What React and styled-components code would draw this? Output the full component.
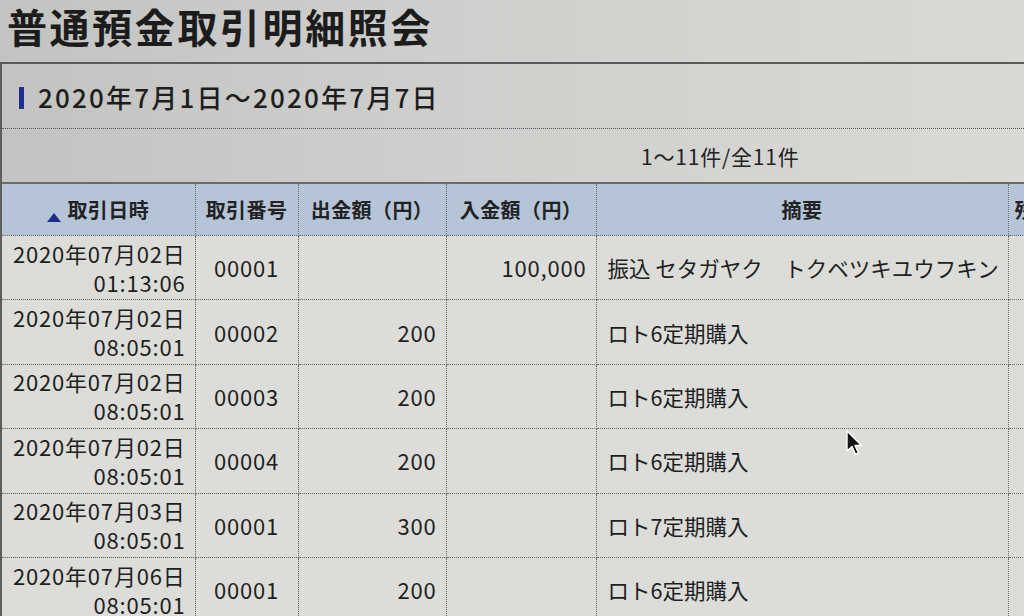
import React from "react";
import styled, { createGlobalStyle } from "styled-components";

const GlobalStyle = createGlobalStyle`
  html, body { margin: 0; padding: 0; overflow: hidden; background: #d0d0ce; }
  body { font-family: "Noto Sans CJK JP", "Noto Sans", sans-serif; color: #222; }
`;

const Page = styled.div`
  position: relative;
  width: 1024px;
  height: 616px;
  overflow: hidden;
  background: linear-gradient(90deg, #c3c3c1 0%, #cfcfcd 45%, #d9d9d6 100%);
`;

const TitleBar = styled.header`
  height: 64px;
  box-sizing: border-box;
  display: flex;
  align-items: flex-start;
  padding: 1px 0 0 7px;
  border-bottom: 2px solid #5a5a5a;
`;

const Title = styled.h1`
  margin: 0;
  font-size: 40px;
  font-weight: 700;
  letter-spacing: 2.6px;
  line-height: 50px;
  color: #1c1c1c;
`;

const Panel = styled.section`
  border-left: 2px solid #5e5e5e;
`;

const SectionHead = styled.div`
  height: 64px;
  display: flex;
  align-items: center;
  gap: 14px;
  padding-left: 17px;
  border-bottom: 1px dotted #555;
`;

const Bar = styled.span`
  width: 5px;
  height: 22px;
  background: #1f2d8c;
  margin-top: 3px;
`;

const RangeText = styled.h2`
  margin: 0;
  font-size: 26px;
  font-weight: 500;
  letter-spacing: 2.2px;
  color: #1e1e1e;
`;

const CountRow = styled.div`
  height: 53px;
  display: flex;
  align-items: center;
  padding-left: 639px;
  font-size: 21px;
  letter-spacing: 0.8px;
  color: #222;
  border-bottom: 2px solid #6a6a6a;
`;

const Table = styled.table`
  border-collapse: collapse;
  table-layout: fixed;
  width: 1140px;
`;

const HeadCell = styled.th`
  height: 51px;
  padding: 0 6px;
  background: #b5c4d7;
  font-size: 20px;
  font-weight: 700;
  letter-spacing: 0.4px;
  color: #222;
  text-align: ${(p) => p.$align || "center"};
  white-space: nowrap;
  border-right: 1px dotted #6c6c6c;
  border-bottom: 1px dotted #6c6c6c;
`;

const SortMark = styled.span`
  display: inline-block;
  width: 0;
  height: 0;
  border-left: 7px solid transparent;
  border-right: 7px solid transparent;
  border-bottom: 9px solid #1d2b8a;
  margin-right: 6px;
  vertical-align: -4px;
`;

const Cell = styled.td`
  height: 63.4px;
  padding: 0 ${(p) => (p.$align === "left" ? "6px" : "9px")} 0 ${(p) => (p.$align === "left" ? "11px" : "9px")};
  font-size: ${(p) => (p.$align === "left" ? "21.5px" : "22px")};
  letter-spacing: ${(p) => (p.$align === "left" ? "0" : "0.8px")};
  line-height: 29px;
  color: #1f1f1f;
  text-align: ${(p) => p.$align || "left"};
  white-space: nowrap;
  overflow: hidden;
  background: #dcdcd9;
  border-right: 1px dotted #6c6c6c;
  border-bottom: 1px dotted #6c6c6c;
`;

const Cursor = styled.svg`
  position: absolute;
  left: 845px;
  top: 430px;
  width: 20px;
  height: 28px;
`;

const rows = [
  { date: "2020年07月02日", time: "01:13:06", no: "00001", out: "", in: "100,000", memo: "振込 セタガヤク　トクベツキユウフキン" },
  { date: "2020年07月02日", time: "08:05:01", no: "00002", out: "200", in: "", memo: "ロト6定期購入" },
  { date: "2020年07月02日", time: "08:05:01", no: "00003", out: "200", in: "", memo: "ロト6定期購入" },
  { date: "2020年07月02日", time: "08:05:01", no: "00004", out: "200", in: "", memo: "ロト6定期購入" },
  { date: "2020年07月03日", time: "08:05:01", no: "00001", out: "300", in: "", memo: "ロト7定期購入" },
  { date: "2020年07月06日", time: "08:05:01", no: "00001", out: "200", in: "", memo: "ロト6定期購入" },
];

export default function App() {
  return (
    <>
      <GlobalStyle />
      <Page>
        <TitleBar>
          <Title>普通預金取引明細照会</Title>
        </TitleBar>
        <Panel>
          <SectionHead>
            <Bar />
            <RangeText>2020年7月1日～2020年7月7日</RangeText>
          </SectionHead>
          <CountRow>1～11件/全11件</CountRow>
          <Table>
            <colgroup>
              <col style={{ width: 193 }} />
              <col style={{ width: 103 }} />
              <col style={{ width: 148 }} />
              <col style={{ width: 150 }} />
              <col style={{ width: 412 }} />
              <col style={{ width: 134 }} />
            </colgroup>
            <thead>
              <tr>
                <HeadCell><SortMark />取引日時</HeadCell>
                <HeadCell>取引番号</HeadCell>
                <HeadCell>出金額（円）</HeadCell>
                <HeadCell>入金額（円）</HeadCell>
                <HeadCell>摘要</HeadCell>
                <HeadCell $align="left">残高（円）</HeadCell>
              </tr>
            </thead>
            <tbody>
              {rows.map((r, i) => (
                <tr key={i}>
                  <Cell $align="right">
                    {r.date}
                    <br />
                    {r.time}
                  </Cell>
                  <Cell $align="center">{r.no}</Cell>
                  <Cell $align="right">{r.out}</Cell>
                  <Cell $align="right">{r.in}</Cell>
                  <Cell $align="left">{r.memo}</Cell>
                  <Cell $align="right"></Cell>
                </tr>
              ))}
            </tbody>
          </Table>
        </Panel>
        <Cursor viewBox="0 0 20 28">
          <path d="M2 1 L2 21 L7 16.5 L10.5 24.5 L13.5 23 L10 15.5 L16.5 15.5 Z" fill="#111" stroke="#fff" strokeWidth="1.4" strokeLinejoin="round" />
        </Cursor>
      </Page>
    </>
  );
}
